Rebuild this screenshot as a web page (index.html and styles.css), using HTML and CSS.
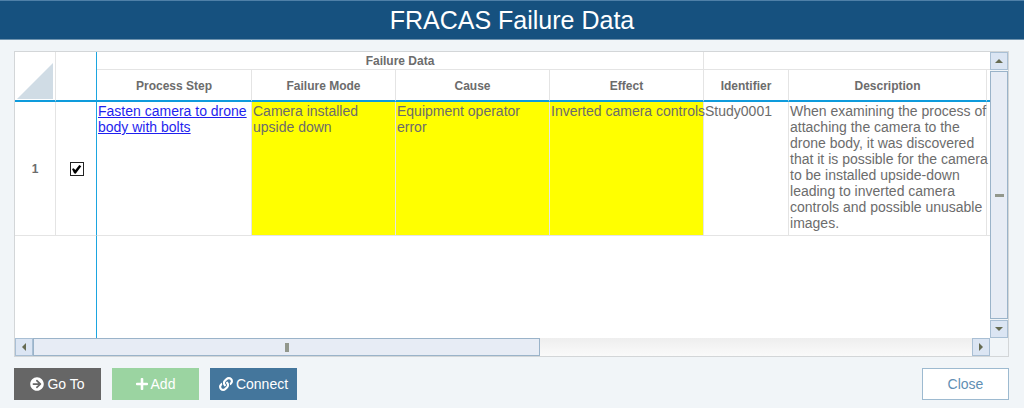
FILE: index.html
```html
<!DOCTYPE html>
<html lang="en">
<head>
<meta charset="utf-8">
<title>FRACAS Failure Data</title>
<link rel="stylesheet" href="styles.css">
</head>
<body>
<header class="title-bar"><h1 class="title">FRACAS Failure Data</h1></header>
<main class="content">
  <section class="grid" aria-label="Failure data">
    <div class="viewport">
      <table class="data">
        <colgroup>
          <col class="col-fixed"><col class="col-fixed"><col class="col-step"><col class="col-mode"><col class="col-wide"><col class="col-wide"><col class="col-id"><col><col class="col-next">
        </colgroup>
        <thead>
          <tr class="group-row">
            <th rowspan="2" class="corner"><svg class="corner-mark" viewBox="0 0 36 36" aria-hidden="true"><path d="M36 0V36H0z"/></svg></th>
            <th rowspan="2" class="frozen"></th>
            <th colspan="4">Failure Data</th>
            <th colspan="3"></th>
          </tr>
          <tr class="name-row">
            <th>Process Step</th><th>Failure Mode</th><th>Cause</th><th>Effect</th><th>Identifier</th><th>Description</th><th></th>
          </tr>
        </thead>
        <tbody>
          <tr class="record">
            <th scope="row">1</th>
            <td class="frozen pick"><input class="check" type="checkbox" aria-label="Select row 1" checked></td>
            <td><a class="link" href="#">Fasten camera to drone body with bolts</a></td>
            <td class="marked">Camera installed upside down</td>
            <td class="marked">Equipment operator error</td>
            <td class="marked one-line">Inverted camera controls</td>
            <td>Study0001</td>
            <td class="one-line">When examining the process of<br>attaching the camera to the<br>drone body, it was discovered<br>that it is possible for the camera<br>to be installed upside-down<br>leading to inverted camera<br>controls and possible unusable<br>images.</td>
            <td></td>
          </tr>
          <tr class="filler"><td></td><td class="frozen"></td><td colspan="7"></td></tr>
        </tbody>
      </table>
    </div>
    <div class="bar vertical">
      <button class="arrow" type="button" aria-label="Scroll up"><svg class="tri" viewBox="0 0 8 8" aria-hidden="true"><path d="M4 2L8 6H0z"/></svg></button>
      <div class="thumb"><span class="grip"></span></div>
      <button class="arrow" type="button" aria-label="Scroll down"><svg class="tri" viewBox="0 0 8 8" aria-hidden="true"><path d="M0 2H8L4 6z"/></svg></button>
    </div>
    <div class="bar horizontal">
      <button class="arrow" type="button" aria-label="Scroll left"><svg class="tri" viewBox="0 0 8 8" aria-hidden="true"><path d="M2 4L6 0V8z"/></svg></button>
      <div class="track"><div class="thumb"><span class="grip"></span></div></div>
      <button class="arrow" type="button" aria-label="Scroll right"><svg class="tri" viewBox="0 0 8 8" aria-hidden="true"><path d="M2 0L6 4L2 8z"/></svg></button>
    </div>
  </section>
  <footer class="actions">
    <button class="btn go" type="button"><svg class="icon" viewBox="0 0 512 512" aria-hidden="true"><path d="M256 8c137 0 248 111 248 248S393 504 256 504 8 393 8 256 119 8 256 8zm-28.900 143.600l75.500 72.400H120c-13.300 0-24 10.700-24 24v16c0 13.300 10.700 24 24 24h182.600l-75.500 72.400c-9.700 9.300-9.900 24.800-.4 34.300l11 10.900c9.400 9.400 24.600 9.400 33.900 0L404.300 273c9.400-9.400 9.400-24.600 0-33.900L271.600 106.300c-9.400-9.400-24.600-9.400-33.900 0l-11 10.900c-9.500 9.600-9.300 25.100.4 34.400z"/></svg>Go To</button>
    <button class="btn add" type="button"><svg class="icon" viewBox="0 0 448 448" aria-hidden="true"><path d="M416 176H272V32c0-17.700-14.300-32-32-32h-32c-17.700 0-32 14.300-32 32v144H32c-17.700 0-32 14.300-32 32v32c0 17.700 14.300 32 32 32h144v144c0 17.700 14.300 32 32 32h32c17.700 0 32-14.300 32-32V272h144c17.700 0 32-14.300 32-32v-32c0-17.700-14.300-32-32-32z"/></svg>Add</button>
    <button class="btn connect" type="button"><svg class="icon" viewBox="0 0 512 512" aria-hidden="true"><path d="M326.612 185.391c59.747 59.809 58.927 155.698.36 214.590-.11.120-.24.250-.36.370l-67.200 67.200c-59.270 59.270-155.699 59.262-214.960 0-59.270-59.260-59.270-155.700 0-214.960l37.106-37.106c9.840-9.840 26.786-3.300 27.294 10.606.648 17.722 3.826 35.527 9.690 52.721 1.986 5.822.567 12.262-3.783 16.612l-13.087 13.087c-28.026 28.026-28.905 73.660-1.155 101.960 28.024 28.579 74.086 28.749 102.325.510l67.200-67.190c28.191-28.191 28.073-73.757 0-101.830-3.701-3.694-7.429-6.564-10.341-8.569a16.037 16.037 0 0 1-6.947-12.606c-.396-10.567 3.348-21.456 11.698-29.806l21.054-21.055c5.521-5.521 14.182-6.199 20.584-1.731a152.482 152.482 0 0 1 20.522 17.197zM467.547 44.449c-59.261-59.262-155.690-59.270-214.960 0l-67.200 67.200c-.12.120-.25.250-.36.370-58.566 58.892-59.387 154.781.36 214.590a152.454 152.454 0 0 0 20.521 17.196c6.402 4.468 15.064 3.789 20.584-1.731l21.054-21.055c8.350-8.350 12.094-19.239 11.698-29.806a16.037 16.037 0 0 0-6.947-12.606c-2.912-2.005-6.640-4.875-10.341-8.569-28.073-28.073-28.191-73.639 0-101.830l67.200-67.190c28.239-28.239 74.300-28.069 102.325.510 27.750 28.300 26.872 73.934-1.155 101.960l-13.087 13.087c-4.350 4.350-5.769 10.790-3.783 16.612 5.864 17.194 9.042 34.999 9.690 52.721.509 13.906 17.454 20.446 27.294 10.606l37.106-37.106c59.271-59.259 59.271-155.699.001-214.959z"/></svg>Connect</button>
    <button class="btn close" type="button">Close</button>
  </footer>
</main>
</body>
</html>
```
FILE: styles.css
```css
* { box-sizing: border-box; }

body {
  display: flex;
  flex-direction: column;
  min-height: 100vh;
  margin: 0;
  background: #f1f5f8;
  color: #6c6c6c;
  font-family: "Liberation Sans", Arial, sans-serif;
  font-size: 14px;
}

.title-bar {
  height: 40px;
  border-top: 1px solid #4f80a8;
  border-bottom: 1px solid #6f93ae;
  background: #16517f;
  color: #fff;
  text-align: center;
}

.title {
  margin: 0;
  font-size: 25px;
  font-weight: 400;
  line-height: 38px;
}

.content {
  display: flex;
  flex: 1;
  flex-direction: column;
  gap: 11px;
  padding: 11px 15px 8px 14px;
}

.grid {
  display: grid;
  flex: 1;
  grid-template-columns: minmax(0, 1fr) 18px;
  grid-template-rows: 1fr 18px;
  border: 1px solid #d3d6d8;
}

.viewport {
  display: flex;
  overflow: hidden;
  background: #fff;
}

.data {
  width: 100%;
  table-layout: fixed;
  border-spacing: 0;
}

.col-fixed { width: 41px; }
.col-step { width: 155px; }
.col-wide { width: 154px; }
.col-mode { width: 144px; }
.col-id { width: 85px; }
.col-next { width: 3px; }

.data th,
.data td {
  padding: 0;
  border-right: 1px solid #e4e4e4;
  border-bottom: 1px solid #e4e4e4;
}

.data th { font-size: 12px; }
.data tr > :last-child { border-right: 0; }
.group-row { height: 18px; }
.name-row { height: 32px; }

.data .name-row th,
.data .group-row th[rowspan] { border-bottom: 2px solid #0e9bdc; }

.data .name-row th { padding-top: 2px; }

.data .frozen { border-right: 1px solid #1ba5e0; }

.data .corner {
  padding: 0 2px 1px;
  text-align: right;
  vertical-align: bottom;
}

.corner-mark {
  display: block;
  width: 36px;
  fill: #d0dce5;
}

.data .record { height: 134px; }

.data .record td {
  padding: 1px 0 2px 1px;
  line-height: 16px;
  vertical-align: top;
}

.data .record .one-line { white-space: nowrap; }

.data .record .pick {
  text-align: center;
  vertical-align: middle;
}

.check {
  display: inline-grid;
  width: 14px;
  height: 14px;
  margin: 0;
  place-content: center;
  border: 1px solid #222;
  background: #fff;
  appearance: none;
  vertical-align: middle;
}

.check:checked::before {
  width: 10px;
  height: 10px;
  background: #000;
  clip-path: polygon(5% 48%, 22% 42%, 38% 58%, 78% 8%, 98% 22%, 42% 95%, 26% 90%);
  content: "";
}

.link { color: #1f1fee; }
.data .marked { background: #ff0; }
.data .filler { height: 100%; }
.data .filler td { border-bottom: 0; }

.bar { display: flex; }
.vertical { flex-direction: column; }

.data .filler td:first-child { border-right: 0; }

.arrow,
.thumb {
  display: flex;
  align-items: center;
  justify-content: center;
  border: 1px solid #a9bfd4;
  background: #dbe5f3;
}

.arrow {
  flex: 0 0 18px;
  padding: 0;
}

.tri {
  width: 8px;
  fill: #666b52;
}

.thumb {
  border-color: #9ab3c9;
  background: #e7ecf5;
}

.vertical .thumb { flex: 1; margin: 1px 0; }
.horizontal .thumb { width: 54%; }

.track {
  display: flex;
  flex: 1;
  background: linear-gradient(#eee, #fafafa);
}

.grip { background: #92978c; }
.vertical .grip { width: 9px; height: 3px; }
.horizontal .grip { width: 4px; height: 9px; }

.actions {
  display: flex;
  gap: 11px;
}

.btn {
  display: flex;
  min-width: 87px;
  height: 32px;
  align-items: center;
  justify-content: center;
  gap: 3px;
  padding: 0 8px;
  border: 0;
  color: #fff;
  font: inherit;
}

.go { background: #666; }
.add { background: #9bd4a1; }
.connect { background: #44769c; }

.close {
  margin-left: auto;
  border: 1px solid #9dbad0;
  background: #fff;
  color: #5f8fb4;
}

.icon {
  width: 14px;
  height: 14px;
  fill: currentColor;
}
.add .icon { width: 12px; }
```
